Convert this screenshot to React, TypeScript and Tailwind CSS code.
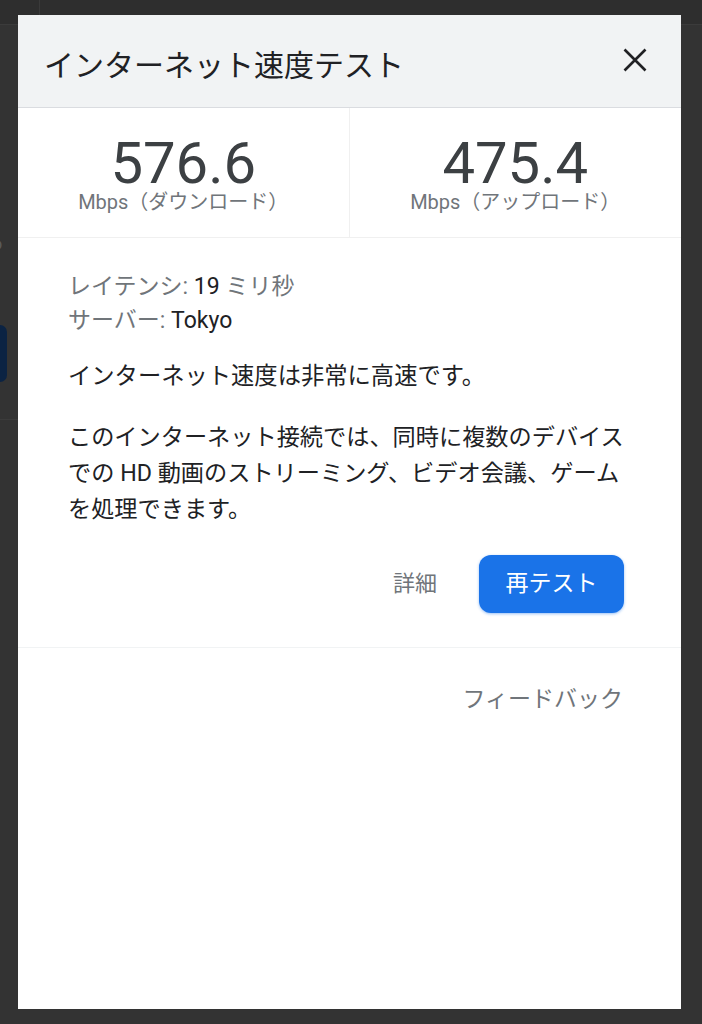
import React from "react";

const FONT = { fontFamily: 'Roboto, "Noto Sans CJK JP", "Liberation Sans", sans-serif' };

export default function App() {
  return (
    <div className="relative w-[702px] h-[1024px] overflow-hidden bg-[#333333]" style={FONT}>
      {/* dimmed page behind */}
      <div className="flex flex-col w-full">
        <div className="flex h-[25px] border-b border-[#3b3b3b] bg-[#2e2e2e]">
          <div className="w-[40px] border-r border-[#3a3a3a]" />
        </div>
        <div className="w-[18px] flex flex-col">
          <div className="h-[209px]" />
          <div className="h-[20px] leading-[20px] text-[18px] text-[#5a5a5a] -ml-[8px]">o</div>
          <div className="h-[71px]" />
          <div className="w-[7px] h-[57px] rounded-r-[8px] bg-[#0b2343]" />
          <div className="h-[38px] border-b border-[#3b3b3b]" />
        </div>
      </div>

      {/* dialog */}
      <div className="absolute left-[18px] top-[15px] w-[663px] h-[994px] bg-white flex flex-col">
        <div className="h-[93px] shrink-0 bg-[#f1f3f4] border-b border-[#dadce0] flex justify-between">
          <div className="pl-[26px] pt-[31px] text-[30px] leading-[40px] text-[#202124]">
            インターネット速度テスト
          </div>
          <div className="pr-[34px] pt-[33px]">
            <svg width="24" height="24" viewBox="0 0 24 24">
              <path d="M1.5 1.5 L22.5 22.5 M22.5 1.5 L1.5 22.5" stroke="#202124" strokeWidth="2.6" fill="none" />
            </svg>
          </div>
        </div>

        <div className="h-[130px] shrink-0 grid grid-cols-2 border-b border-[#f0f0f0]">
          <div className="flex flex-col items-center pt-[30px] border-r border-[#f0f0f0]">
            <div className="text-[58px] leading-[50px] text-[#3c4043]">576.6</div>
            <div className="mt-[3px] text-[20px] leading-[22px] text-[#70757a]">Mbps（ダウンロード）</div>
          </div>
          <div className="flex flex-col items-center pt-[30px]">
            <div className="text-[58px] leading-[50px] text-[#3c4043]">475.4</div>
            <div className="mt-[3px] text-[20px] leading-[22px] text-[#70757a]">Mbps（アップロード）</div>
          </div>
        </div>

        <div className="pt-[32px] pl-[50px] pr-[50px] pb-[34px] border-b border-[#f1f3f4]">
          <div className="text-[23px] leading-[34px] text-[#70757a]">
            <div>
              レイテンシ: <span className="text-[#202124]">19</span> ミリ秒
            </div>
            <div>
              サーバー: <span className="text-[#202124]">Tokyo</span>
            </div>
          </div>
          <div className="mt-[20px] text-[23.3px] leading-[36px] text-[#202124]">
            インターネット速度は非常に高速です。
          </div>
          <div className="mt-[25px] text-[23.2px] leading-[36px] text-[#202124]">
            <div className="whitespace-nowrap">このインターネット接続では、同時に複数のデバイス</div>
            <div className="whitespace-nowrap">での HD 動画のストリーミング、ビデオ会議、ゲーム</div>
            <div className="whitespace-nowrap">を処理できます。</div>
          </div>
          <div className="mt-[28px] pr-[7px] flex justify-end items-center">
            <div className="mr-[42px] text-[22px] leading-[30px] text-[#70757a]">詳細</div>
            <div className="w-[145px] h-[58px] rounded-[12px] bg-[#1a73e8] text-white text-[23px] flex items-center justify-center shadow-[0_1px_3px_rgba(26,115,232,0.45)]">
              再テスト
            </div>
          </div>
        </div>

        <div className="pt-[34px] pr-[58px] flex justify-end">
          <div className="text-[23px] leading-[36px] text-[#70757a]">フィードバック</div>
        </div>
      </div>
    </div>
  );
}
